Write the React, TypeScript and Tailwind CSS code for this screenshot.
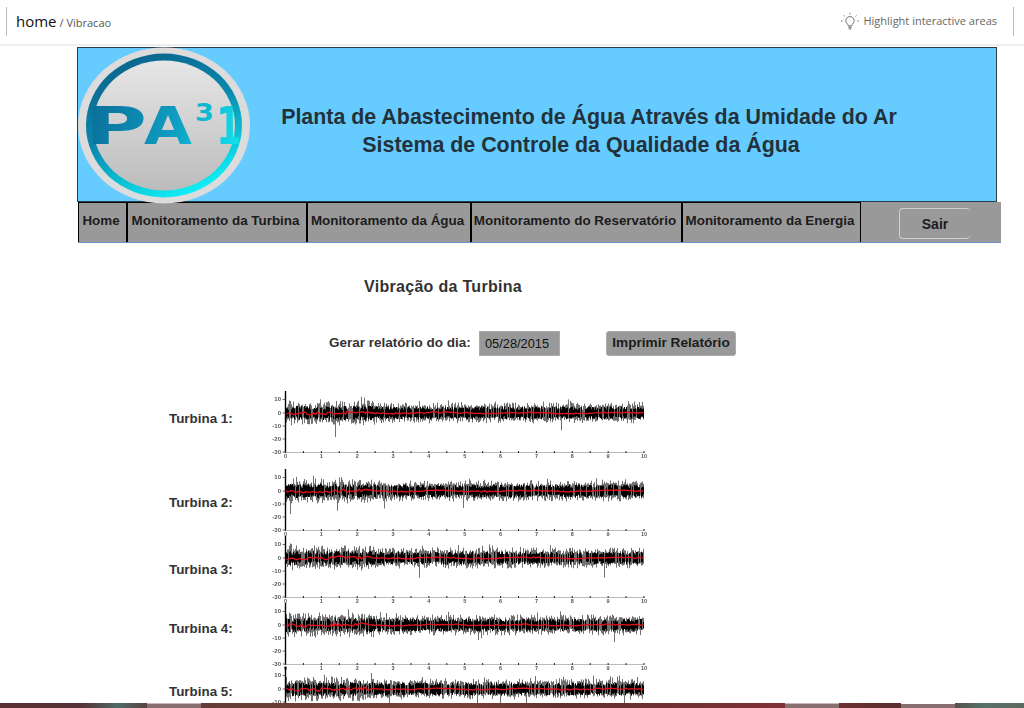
import React from "react";

function rng(seed: number) {
  let s = seed;
  return () => {
    s = (s * 1664525 + 1013904223) % 4294967296;
    return s / 4294967296;
  };
}

function Chart({ seed, cut }: { seed: number; cut?: boolean }) {
  const r = rng(seed);
  const x0 = 15.5;
  const unit = 35.85;
  const zero = 22;
  let spikes = "";
  let band = "";
  const red: string[] = [];
  for (let i = 0; i <= 358; i++) {
    const x = x0 + i;
    const early = i < 90 ? 1.05 : 0.88;
    const a = r();
    let up = 4 + r() * 5;
    let down = 4 + r() * 5;
    if (a > 0.66) up = 8 + r() * 4;
    if (a < 0.32) down = 8 + r() * 4;
    if (a > 0.96) up = 12 + r() * 4 * early;
    if (a < 0.012) down = 14 + r() * 9;
    spikes += `M${x} ${(zero - up * early).toFixed(1)}V${(zero + down * early).toFixed(1)}`;
    if (r() > 0.25) {
      band += `M${x} ${(zero - 3 - r() * 4 * early).toFixed(1)}V${(zero + 3 + r() * 4 * early).toFixed(1)}`;
    }
    if (i % 2 === 0) {
      const w = Math.sin(i / 14) * 0.5 + (r() - 0.5) * (i < 85 ? 3.4 : 1.4);
      red.push(`${x},${(zero + w).toFixed(1)}`);
    }
  }
  const yt: [string, number][] = cut
    ? [["10", 8.5], ["0", 22], ["-10", 35]]
    : [["10", 8.5], ["0", 22], ["-10", 35], ["-20", 48], ["-30", 61]];
  return (
    <svg width="384" height="70" viewBox="0 0 384 70" className="block shrink-0">
      <g style={{ filter: "blur(0.3px)" }}>
        <path d={spikes} fill="none" stroke="#222" strokeWidth="0.65" />
        <path d={band} fill="none" stroke="#000" strokeWidth="1" />
        <polyline points={red.join(" ")} fill="none" stroke="#e5101a" strokeWidth="1.3" />
        <line x1={x0} y1="0" x2={x0} y2="62" stroke="#000" strokeWidth="1.4" />
        {!cut && <line x1={x0} y1="61.5" x2={x0 + unit * 10} y2="61.5" stroke="#bbb" strokeWidth="1" />}
        {yt.map(([t, y]) => (
          <g key={t}>
            <line x1={x0 - 3} y1={y} x2={x0} y2={y} stroke="#333" strokeWidth="0.7" />
            <text x={x0 - 4.5} y={y + 1.8} textAnchor="end" fontSize="6" fontWeight="700" fill="#555" fontFamily="'Liberation Sans', sans-serif">{t}</text>
          </g>
        ))}
        {!cut && Array.from({ length: 21 }, (_, i) => (
          <rect key={i} x={x0 + (i * unit) / 2 - 0.5} y="60" width="1" height="2" fill="#222" />
        ))}
        {!cut && Array.from({ length: 11 }, (_, i) => (
          <text key={i} x={x0 + i * unit} y="66.5" textAnchor="middle" fontSize="5.5" fontWeight="700" fill="#555" fontFamily="'Liberation Sans', sans-serif">{i}</text>
        ))}
      </g>
    </svg>
  );
}

function Logo() {
  const letter = { fontFamily: "'DejaVu Sans', sans-serif", fontWeight: 700, fill: "url(#letters)", lengthAdjust: "spacingAndGlyphs" as const };
  return (
    <svg width="176" height="158" viewBox="0 0 176 158" className="block">
      <defs>
        <linearGradient id="ring" x1="0.15" y1="0" x2="0.6" y2="1">
          <stop offset="0" stopColor="#0b6088" />
          <stop offset="0.5" stopColor="#0a88ad" />
          <stop offset="0.8" stopColor="#0bc6d8" />
          <stop offset="1" stopColor="#12eef5" />
        </linearGradient>
        <linearGradient id="face" x1="0" y1="0" x2="0" y2="1">
          <stop offset="0" stopColor="#e6e6e6" />
          <stop offset="1" stopColor="#bcbcbc" />
        </linearGradient>
        <linearGradient id="letters" gradientUnits="userSpaceOnUse" x1="10" y1="55" x2="165" y2="100">
          <stop offset="0" stopColor="#0a6c98" />
          <stop offset="0.55" stopColor="#0e9cc0" />
          <stop offset="1" stopColor="#12e4ee" />
        </linearGradient>
      </defs>
      <ellipse cx="87" cy="78.5" rx="86" ry="78" fill="#dcdcdc" />
      <ellipse cx="87" cy="78.5" rx="78" ry="72" fill="url(#ring)" />
      <ellipse cx="87" cy="78.5" rx="71" ry="65" fill="url(#face)" />
      <text x="8" y="97" fontSize="52" textLength="62" {...letter}>P</text>
      <text x="67" y="97" fontSize="52" textLength="48" {...letter}>A</text>
      <text x="118" y="74" fontSize="24" textLength="19" {...letter}>3</text>
      <text x="139" y="97" fontSize="52" textLength="25" {...letter}>1</text>
    </svg>
  );
}

function NavItem({ label, w, first }: { label: string; w: string; first?: boolean }) {
  return (
    <div className={`${w} h-full flex items-center justify-center border-t border-black ${first ? "border-l" : "border-l-2"} pb-[3px] pr-[3px] text-[13.4px] font-bold text-[#1c1c1c] whitespace-nowrap`}>
      {label}
    </div>
  );
}

const rows = [
  { label: "Turbina 1:", h: "h-[78px]", top: "pt-[20px]", seed: 11 },
  { label: "Turbina 2:", h: "h-[67px]", top: "pt-[26px]", seed: 29 },
  { label: "Turbina 3:", h: "h-[67px]", top: "pt-[26px]", seed: 47 },
  { label: "Turbina 4:", h: "h-[64px]", top: "pt-[18px]", seed: 83 },
  { label: "Turbina 5:", h: "h-[70px]", top: "pt-[17px]", seed: 101, cut: true },
];

export default function App() {
  return (
    <div className="relative w-[1024px] h-[708px] overflow-hidden bg-white font-['Liberation_Sans',Arial,sans-serif] text-[#2b2b2b]">
      <header className="h-[46px] flex items-start justify-between border-b-2 border-[#eeeeee] font-['Open_Sans',sans-serif]">
        <div className="ml-[6px] mt-[7px] h-[29px] border-l border-[#bbbbbb] pl-[9px] flex items-center whitespace-nowrap">
          <span className="text-[15px] text-[#111]">home</span>
          <span className="text-[11px] text-[#555] ml-[3px] mt-[3px]">/ Vibracao</span>
        </div>
        <div className="mr-[10px] mt-[7px] h-[29px] flex items-center whitespace-nowrap">
          <svg width="20" height="20" viewBox="0 0 20 20" fill="none" stroke="#777" strokeWidth="1" className="mr-[3px]">
            <path d="M10 4.5a4.2 4.2 0 0 0-2.6 7.5c.6.5.8 1.1.8 1.8h3.6c0-.7.2-1.3.8-1.8A4.2 4.2 0 0 0 10 4.5z" />
            <path d="M8.3 15.2h3.4M8.8 16.8h2.4" strokeWidth="1.3" />
            <path d="M10 .8v1.6M3.5 3.3l1.1 1.1M16.5 3.3l-1.1 1.1M1 9h1.6M17.4 9H19" />
          </svg>
          <span className="text-[11px] text-[#666]">Highlight interactive areas</span>
          <div className="ml-[16px] h-full border-l border-[#bbbbbb]" />
        </div>
      </header>

      <div className="ml-[77px] mt-[1px] w-[920px] h-[155px] bg-[#66ccff] border border-[#2c3e4a] flex items-center relative">
        <div className="absolute -left-[1px] -top-[1px]"><Logo /></div>
        <h1 className="ml-[201px] w-[620px] pt-[13px] text-center text-[21.4px] leading-[28px] font-bold text-[#22313a] whitespace-nowrap">
          Planta de Abastecimento de Água Através da Umidade do Ar
          <br />
          <span className="pr-[16px]">Sistema de Controle da Qualidade da Água</span>
        </h1>
      </div>

      <nav className="ml-[78px] w-[923px] h-[41px] bg-[#999999] border-b border-[#6f8fc9] flex">
        <NavItem first label="Home" w="w-[48px]" />
        <NavItem label="Monitoramento da Turbina" w="w-[180px]" />
        <NavItem label="Monitoramento da Água" w="w-[164px]" />
        <NavItem label="Monitoramento do Reservatório" w="w-[211px]" />
        <div className="w-[180px] h-full flex items-center justify-center border-l-2 border-r border-t border-black pb-[3px] pr-[3px] text-[13.4px] font-bold text-[#1c1c1c] whitespace-nowrap">
          Monitoramento da Energia
        </div>
        <div className="ml-[38px] mt-[6px] w-[71px] h-[31px] pt-[1px] rounded-[4px] border border-r-0 border-[#cfcfcf] flex items-center justify-center text-[14px] font-bold text-[#1c1c1c]">
          Sair
        </div>
      </nav>

      <h2 className="ml-[364px] mt-[35px] text-[16px] tracking-[0.3px] leading-[18px] font-bold text-[#333]">Vibração da Turbina</h2>

      <div className="mt-[35px] ml-[329px] flex items-center h-[25px]">
        <span className="w-[150px] text-[13.5px] font-bold text-[#333] whitespace-nowrap">Gerar relatório do dia:</span>
        <div className="w-[81px] h-[25px] bg-[#999999] border border-[#aaaaaa] flex items-center pl-[5px] text-[12.8px] text-[#111]">05/28/2015</div>
        <button className="ml-[46px] w-[130px] h-[25px] bg-[#999999] rounded-[3px] border border-[#aaaaaa] text-[13.65px] font-bold text-[#1c1c1c]">Imprimir Relatório</button>
      </div>

      <div className="mt-[35px] ml-[169px]">
        {rows.map((row) => (
          <div key={row.label} className={`flex ${row.h}`}>
            <div className={`w-[101px] ${row.top} text-[13.4px] leading-[16px] font-bold text-[#333] whitespace-nowrap`}>{row.label}</div>
            <Chart seed={row.seed} cut={row.cut} />
          </div>
        ))}
      </div>

      <div className="absolute left-0 right-0 bottom-0 h-[5px] bg-[linear-gradient(90deg,#5a3034_0%,#553336_8%,#4f6b66_11.5%,#5c3a38_15%,#6b3f35_26%,#7a4238_44%,#60302f_55%,#7f3036_76%,#54302f_90%,#557068_96%,#5c6a62_100%)]">
        <div className="absolute left-[147px] w-[54px] top-0 h-full bg-[#8a6f70] border-t border-[#c9b9b9]" />
        <div className="absolute left-[785px] w-[54px] top-0 h-full bg-[#8a6f70] border-t border-[#c9b9b9]" />
        <div className="absolute left-[901px] w-[54px] top-0 h-full bg-[#8a6f70] border-t border-white" />
      </div>
    </div>
  );
}
